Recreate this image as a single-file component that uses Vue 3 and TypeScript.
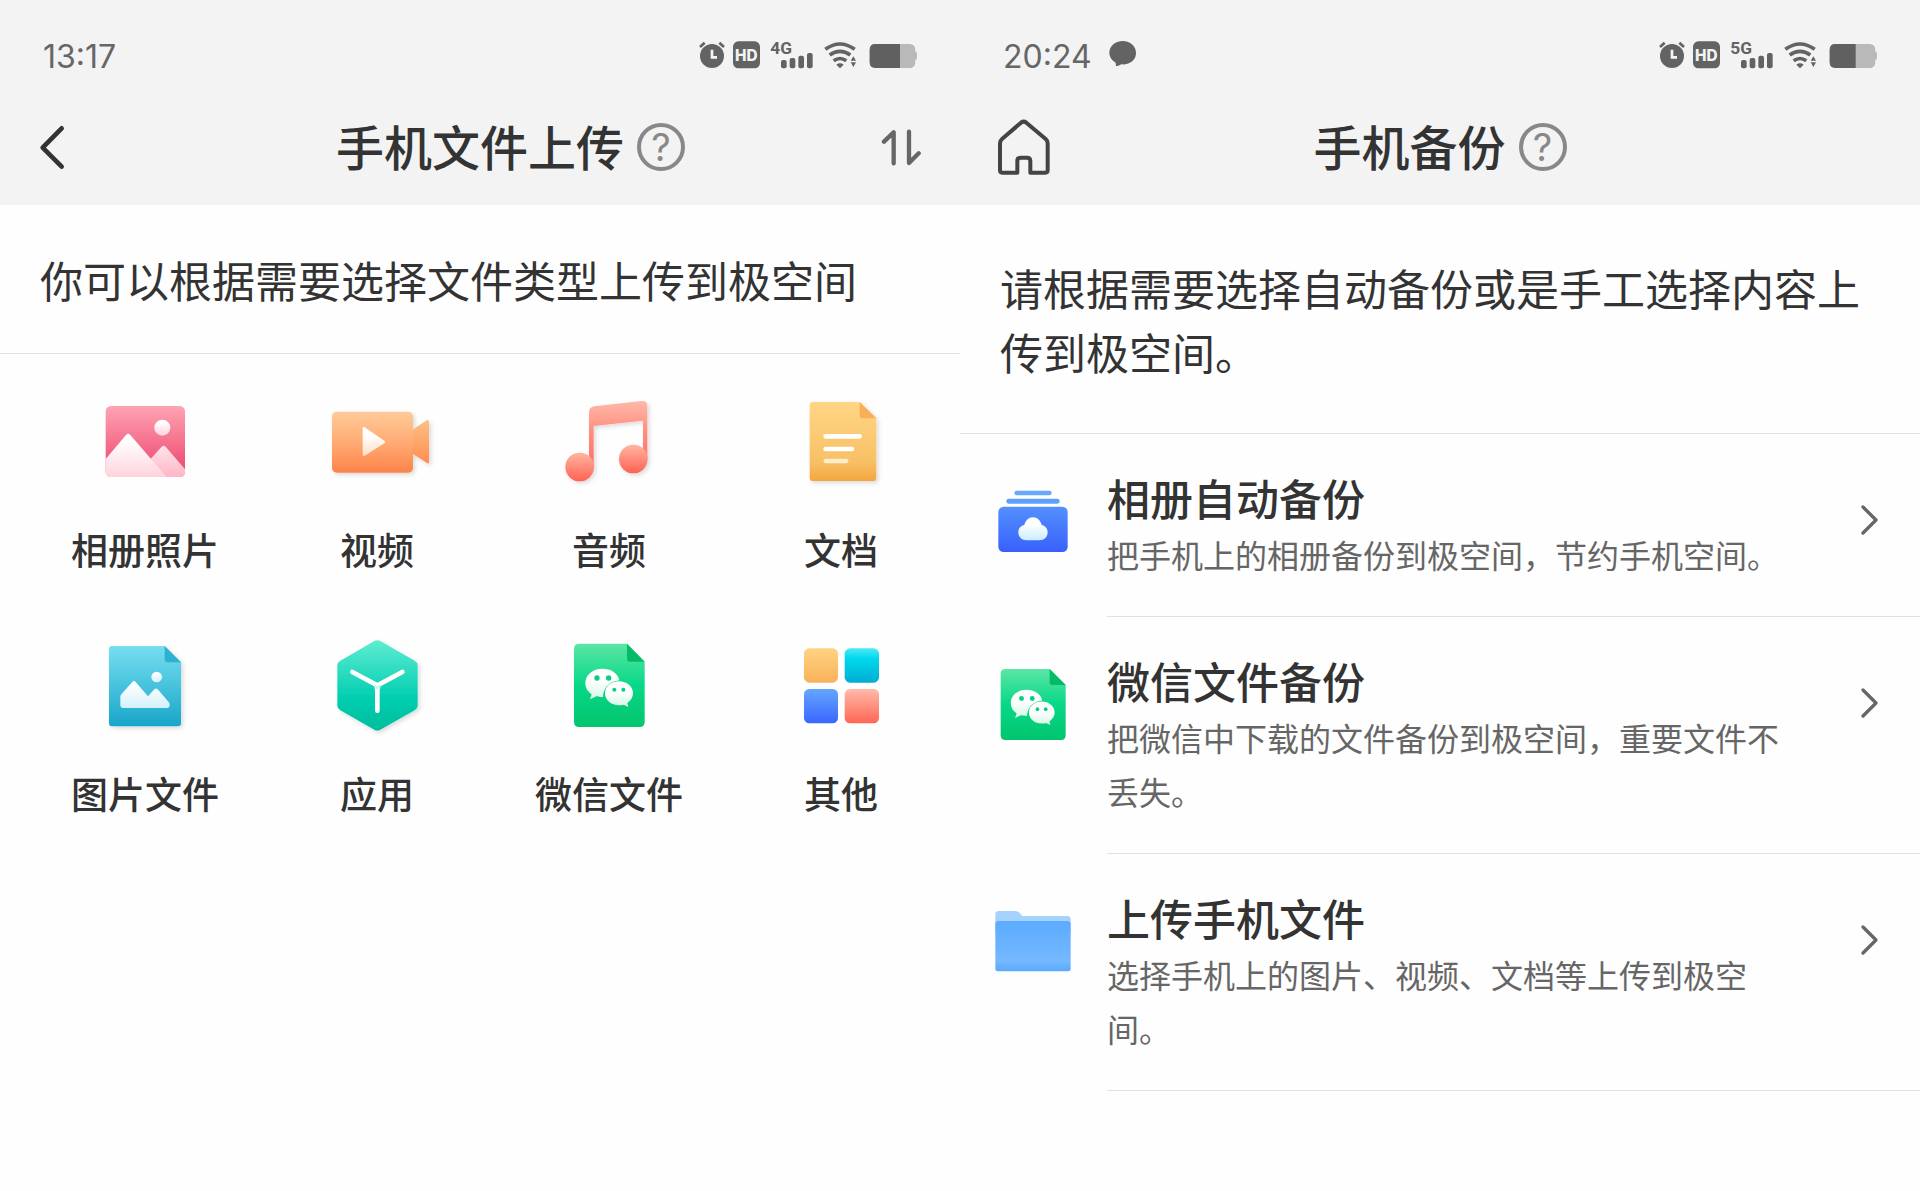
<script setup lang="ts">
interface FileType {
  id: string
  label: string
  viewBox: string
}

interface BackupEntry {
  id: string
  title: string
  description: string
  viewBox: string
}

interface StatusInfo {
  network: string
  charge: number
}

const fileTypes: FileType[] = [
  { id: 'photo', label: '相册照片', viewBox: '74 6 360 360' },
  { id: 'video', label: '视频', viewBox: '769 6 360 360' },
  { id: 'audio', label: '音频', viewBox: '87 6 360 360' },
  { id: 'document', label: '文档', viewBox: '780 6 360 360' },
  { id: 'picture', label: '图片文件', viewBox: '76 15 360 360' },
  { id: 'app', label: '应用', viewBox: '771 15 360 360' },
  { id: 'wechat', label: '微信文件', viewBox: '87 15 360 360' },
  { id: 'other', label: '其他', viewBox: '783 15 360 360' },
]

const backups: BackupEntry[] = [
  {
    id: 'album',
    title: '相册自动备份',
    description: '把手机上的相册备份到极空间，节约手机空间。',
    viewBox: '70 27 300 300',
  },
  {
    id: 'wechat',
    title: '微信文件备份',
    description: '把微信中下载的文件备份到极空间，重要文件不丢失。',
    viewBox: '70 36 300 300',
  },
  {
    id: 'folder',
    title: '上传手机文件',
    description: '选择手机上的图片、视频、文档等上传到极空间。',
    viewBox: '70 27 300 300',
  },
]

const statuses: Record<'upload' | 'backup', StatusInfo> = {
  upload: { network: '4G', charge: 90 },
  backup: { network: '5G', charge: 77 },
}
</script>

<template>
  <main class="screens">
    <svg class="defs" width="0" height="0" aria-hidden="true">
      <defs>
        <linearGradient id="pink" x1="0" y1="0" x2="0" y2="1"><stop offset="0" stop-color="#ffa3b2" /><stop offset="0.8" stop-color="#ef5579" /><stop offset="1" stop-color="#ef5579" /></linearGradient>
        <linearGradient id="snow" x1="0" y1="0" x2="0" y2="1"><stop offset="0.15" stop-color="#fff" /><stop offset="1" stop-color="#ffd3dc" /></linearGradient>
        <linearGradient id="snow-far" x1="0" y1="0" x2="0" y2="1"><stop offset="0" stop-color="#ffe4ea" /><stop offset="1" stop-color="#ffb6c6" /></linearGradient>
        <linearGradient id="orange" x1="0" y1="0" x2="0" y2="1"><stop offset="0" stop-color="#ffcb98" /><stop offset="0.5" stop-color="#ffab75" /><stop offset="1" stop-color="#fd8449" /></linearGradient>
        <linearGradient id="lens" x1="0" y1="0" x2="0" y2="1"><stop offset="0" stop-color="#fdc083" /><stop offset="1" stop-color="#ff8d52" /></linearGradient>
        <linearGradient id="play" x1="0" y1="0" x2="0" y2="1"><stop offset="0.3" stop-color="#fff" /><stop offset="1" stop-color="#ffdcc4" /></linearGradient>
        <linearGradient id="coral" x1="0" y1="0" x2="0" y2="1"><stop offset="0" stop-color="#ffb6a3" /><stop offset="1" stop-color="#ff6152" /></linearGradient>
        <linearGradient id="beam" x1="0" y1="0" x2="0" y2="1"><stop offset="0" stop-color="#ffb8a8" /><stop offset="0.45" stop-color="#ff8f80" /><stop offset="1" stop-color="#ff6f62" /></linearGradient>
        <linearGradient id="amber" x1="0" y1="0" x2="0" y2="1"><stop offset="0" stop-color="#ffd685" /><stop offset="0.75" stop-color="#f8c065" /><stop offset="1" stop-color="#f3a741" /></linearGradient>
        <linearGradient id="sky" x1="0" y1="0" x2="0" y2="1"><stop offset="0" stop-color="#76def1" /><stop offset="1" stop-color="#18a6c9" /></linearGradient>
        <linearGradient id="ice" x1="0" y1="0" x2="0" y2="1"><stop offset="0.1" stop-color="#fff" /><stop offset="1" stop-color="#d3f1fb" /></linearGradient>
        <linearGradient id="teal" x1="0" y1="0" x2="0" y2="1"><stop offset="0" stop-color="#5fecd2" /><stop offset="0.65" stop-color="#00ceb0" /><stop offset="1" stop-color="#00bd9c" /></linearGradient>
        <linearGradient id="green" x1="0" y1="0" x2="0" y2="1"><stop offset="0" stop-color="#5be6a4" /><stop offset="0.5" stop-color="#07d888" /><stop offset="1" stop-color="#03c46d" /></linearGradient>
        <linearGradient id="bubble" x1="0" y1="0" x2="0" y2="1"><stop offset="0.4" stop-color="#fff" /><stop offset="1" stop-color="#d4f7e5" /></linearGradient>
        <linearGradient id="tile-yellow" x1="0" y1="0" x2="0" y2="1"><stop offset="0" stop-color="#ffd383" /><stop offset="1" stop-color="#f9b15a" /></linearGradient>
        <linearGradient id="tile-cyan" x1="0" y1="0" x2="0" y2="1"><stop offset="0" stop-color="#4be9f6" /><stop offset="0.3" stop-color="#00d8ed" /><stop offset="1" stop-color="#00add2" /></linearGradient>
        <linearGradient id="tile-blue" x1="0" y1="0" x2="0" y2="1"><stop offset="0" stop-color="#65a5ff" /><stop offset="1" stop-color="#3a66ff" /></linearGradient>
        <linearGradient id="tile-red" x1="0" y1="0" x2="0" y2="1"><stop offset="0" stop-color="#ffbaab" /><stop offset="1" stop-color="#ff6654" /></linearGradient>
        <linearGradient id="album" x1="0" y1="0" x2="0" y2="1"><stop offset="0" stop-color="#5390ff" /><stop offset="1" stop-color="#3860fb" /></linearGradient>
        <linearGradient id="cloud" x1="0" y1="0" x2="0" y2="1"><stop offset="0.3" stop-color="#fff" /><stop offset="1" stop-color="#c9edfd" /></linearGradient>
        <linearGradient id="folder" x1="0" y1="0" x2="0" y2="1"><stop offset="0" stop-color="#5cabff" /><stop offset="0.8" stop-color="#74b8ff" /><stop offset="1" stop-color="#5aa8fd" /></linearGradient>
        <filter id="drop" x="-20%" y="-20%" width="150%" height="150%"><feDropShadow dx="6" dy="6" stdDeviation="6" flood-color="#000" flood-opacity="0.14" /></filter>
        <g id="wechat-bubbles">
          <path fill="url(#bubble)" d="M247 143c-29 0-51 19-51 43 0 14 7 26 19 34l-5 15 19-9c6 2 12 2 20 2 1-26 18-47 49-50-3-21-25-35-51-35z" />
          <path fill="url(#bubble)" d="M297 181c-24 0-42 16-42 36s18 36 42 36c5 0 10-1 14-2l14 7-3-12c10-7 17-17 17-29 0-20-18-36-42-36z" />
          <g fill="#07cf80"><circle cx="231" cy="171" r="8" /><circle cx="266" cy="171" r="8" /><circle cx="283" cy="206" r="6" /><circle cx="310" cy="206" r="6" /></g>
        </g>
      </defs>
    </svg>

    <section class="screen" aria-label="手机文件上传">
      <header class="top">
        <div class="status">
          <span class="time">13:17</span>
          <svg class="indicators" viewBox="648 56 672 96" aria-hidden="true">
            <g fill="#636363">
              <circle cx="696" cy="107" r="36" />
              <path d="M660 80l14-13M732 80l-14-13" stroke="#636363" stroke-width="8" />
              <path d="M696 88v23h15" fill="none" stroke="#f3f3f3" stroke-width="8" />
              <rect x="759" y="63" width="81" height="81" rx="16" />
              <text class="hd" x="799" y="121" text-anchor="middle" fill="#f3f3f3">HD</text>
              <text class="net" x="871" y="100">{{ statuses.upload.network }}</text>
              <rect x="903" y="119" width="17" height="25" rx="6" /><rect x="929" y="113" width="17" height="31" rx="6" /><rect x="955" y="106" width="17" height="38" rx="6" /><rect x="981" y="98" width="17" height="46" rx="6" />
              <path d="M1069 133q11-8 22 0l-11 11z" />
              <path d="M1112 121h16l-8-13zM1112 126h16l-8 14z" />
            </g>
            <path d="M1036 87q44-32 88 0M1049 104q31-22 62 0M1061 121q19-13 38 0" fill="none" stroke="#636363" stroke-width="11" />
            <path d="M1186 71h102q18 0 18 18v5q5 0 5 5v15q0 5-5 5v6q0 18-18 18h-102q-17 0-17-17v-38q0-17 17-17z" fill="#b9b9b9" />
            <path :d="`M1186 71h${statuses.upload.charge - 16}v72h-${statuses.upload.charge - 16}q-17 0-17-17v-38q0-17 17-17z`" fill="#606060" />
          </svg>
        </div>
        <nav class="nav">
          <button class="tool" type="button" aria-label="返回">
            <svg width="30" height="50" viewBox="110 300 90 150"><path d="M184 319l-57 58 57 57" fill="none" stroke="#333" stroke-width="14" stroke-linecap="round" stroke-linejoin="round" /></svg>
          </button>
          <div class="heading heading-offset">
            <h1>手机文件上传</h1>
            <button class="help" type="button" aria-label="帮助">?</button>
          </div>
          <button class="tool tool-end" type="button" aria-label="传输列表">
            <svg width="42" height="50" viewBox="1203 300 126 150"><path d="M1212 359l29-28v93M1287 329v94l29-29" fill="none" stroke="#666" stroke-width="13" stroke-linecap="round" stroke-linejoin="round" /></svg>
          </button>
        </nav>
      </header>

      <p class="intro">你可以根据需要选择文件类型上传到极空间</p>

      <div class="types">
        <button v-for="item in fileTypes" :key="item.id" class="type" type="button">
          <svg class="type-icon" :viewBox="item.viewBox" aria-hidden="true">
            <g v-if="item.id === 'photo'">
              <rect x="136" y="78" width="238" height="213" rx="16" fill="url(#pink)" />
              <path d="M270 238l34-38q6-6 12 0l58 68v9q0 14-15 14H240z" fill="url(#snow-far)" />
              <path d="M136 237l61-72q7-7 13 0l109 126H151q-15 0-15-14z" fill="url(#snow)" />
              <circle cx="306" cy="143" r="24" fill="url(#snow)" />
            </g>
            <g v-else-if="item.id === 'video'" filter="url(#drop)">
              <path d="M1052 151l47-30q6-3 6 4v120q0 8-6 4l-47-30z" fill="url(#lens)" />
              <rect x="814" y="95" width="243" height="183" rx="14" fill="url(#orange)" />
              <path d="M906 145q0-6 6-3l60 41q4 3 0 6l-60 38q-6 3-6-3z" fill="url(#play)" />
            </g>
            <g v-else-if="item.id === 'audio'" filter="url(#drop)">
              <path d="M207 98q0-17 16-19l142-16q17-1 17 15v158h-13V122l-148 16v124h-14z" fill="url(#beam)" />
              <circle cx="179" cy="261" r="43" fill="url(#coral)" /><circle cx="340" cy="237" r="43" fill="url(#coral)" />
            </g>
            <g v-else-if="item.id === 'document'" filter="url(#drop)">
              <path d="M876 66h140l50 49v178q0 10-10 10H876q-10 0-10-10V76q0-10 10-10z" fill="url(#amber)" />
              <path d="M1016 66l50 49h-41q-9 0-9-9z" fill="#f9ae58" />
              <path d="M914 169h102M914 207h79" stroke="#fff" stroke-width="14" stroke-linecap="round" />
              <path d="M914 243h62" stroke="#ffedcc" stroke-width="13" stroke-linecap="round" />
            </g>
            <g v-else-if="item.id === 'picture'" filter="url(#drop)">
              <path d="M157 75h158l49 49v182q0 10-10 10H157q-9 0-9-10V85q0-10 9-10z" fill="url(#sky)" />
              <path d="M315 75l49 49h-40q-9 0-9-9z" fill="#2fb0d2" />
              <path d="M182 228q0-5 3-8l33-37q5-6 10 0l37 43 19-21q5-5 10 0l33 38q3 4 3 8v2q0 8-9 8H191q-9 0-9-9z" fill="url(#ice)" />
              <circle cx="291" cy="168" r="16" fill="url(#ice)" />
            </g>
            <g v-else-if="item.id === 'app'" filter="url(#drop)">
              <path d="M943 60q9-5 18 0l103 59q9 5 9 14v121q0 9-9 14l-103 58q-9 5-18 0l-102-58q-9-5-9-14V133q0-9 9-14z" fill="url(#teal)" />
              <path d="M877 153l75 40 75-40M952 193v76" fill="none" stroke="#fff" stroke-width="14" stroke-linecap="round" />
              <path d="M943 190l9 5 9-5v14h-18z" fill="#cdf8ef" />
            </g>
            <g v-else-if="item.id === 'wechat'">
              <path d="M178 68h143l53 54v180q0 16-16 16H178q-16 0-16-16V84q0-16 16-16z" fill="url(#green)" />
              <path d="M321 68l53 54h-45q-8 0-8-8z" fill="#05bb66" />
              <use href="#wechat-bubbles" />
            </g>
            <g v-else>
              <rect x="852" y="82" width="102" height="103" rx="16" fill="url(#tile-yellow)" />
              <rect x="974" y="82" width="103" height="103" rx="16" fill="url(#tile-cyan)" />
              <rect x="852" y="204" width="102" height="103" rx="16" fill="url(#tile-blue)" />
              <rect x="974" y="204" width="103" height="103" rx="16" fill="url(#tile-red)" />
            </g>
          </svg>
          <span class="type-label">{{ item.label }}</span>
        </button>
      </div>
    </section>

    <section class="screen" aria-label="手机备份">
      <header class="top">
        <div class="status">
          <span class="time">20:24</span>
          <svg class="message" width="30" height="32" viewBox="441 56 90 96" aria-hidden="true"><path d="M485 62c-23 0-40 15-40 36 0 12 7 22 19 29l1 11q10-2 16-6c25 2 44-12 44-34 0-21-17-36-40-36z" fill="#636363" /></svg>
          <svg class="indicators" viewBox="648 56 672 96" aria-hidden="true">
            <g fill="#636363">
              <circle cx="696" cy="107" r="36" />
              <path d="M660 80l14-13M732 80l-14-13" stroke="#636363" stroke-width="8" />
              <path d="M696 88v23h15" fill="none" stroke="#f3f3f3" stroke-width="8" />
              <rect x="759" y="63" width="81" height="81" rx="16" />
              <text class="hd" x="799" y="121" text-anchor="middle" fill="#f3f3f3">HD</text>
              <text class="net" x="871" y="100">{{ statuses.backup.network }}</text>
              <rect x="903" y="119" width="17" height="25" rx="6" /><rect x="929" y="113" width="17" height="31" rx="6" /><rect x="955" y="106" width="17" height="38" rx="6" /><rect x="981" y="98" width="17" height="46" rx="6" />
              <path d="M1069 133q11-8 22 0l-11 11z" />
              <path d="M1112 121h16l-8-13zM1112 126h16l-8 14z" />
            </g>
            <path d="M1036 87q44-32 88 0M1049 104q31-22 62 0M1061 121q19-13 38 0" fill="none" stroke="#636363" stroke-width="11" />
            <path d="M1186 71h102q18 0 18 18v5q5 0 5 5v15q0 5-5 5v6q0 18-18 18h-102q-17 0-17-17v-38q0-17 17-17z" fill="#b9b9b9" />
            <path :d="`M1186 71h${statuses.backup.charge - 16}v72h-${statuses.backup.charge - 16}q-17 0-17-17v-38q0-17 17-17z`" fill="#606060" />
          </svg>
        </div>
        <nav class="nav">
          <button class="tool" type="button" aria-label="首页">
            <svg width="54" height="58" viewBox="110 296 162 174"><path d="M182 310q8-6 16 0l58 49q6 5 6 13v81q0 7-7 7h-45v-35q0-10-10-10h-19q-10 0-10 10v35h-45q-7 0-7-7v-81q0-8 6-13z" fill="none" stroke="#444" stroke-width="12" stroke-linejoin="round" /></svg>
          </button>
          <div class="heading">
            <h1>手机备份</h1>
            <button class="help" type="button" aria-label="帮助">?</button>
          </div>
        </nav>
      </header>

      <p class="intro intro-tall">请根据需要选择自动备份或是手工选择内容上传到极空间。</p>

      <div class="entries">
        <a v-for="entry in backups" :key="entry.id" class="entry" href="#">
          <svg class="entry-icon" :viewBox="entry.viewBox" aria-hidden="true">
            <g v-if="entry.id === 'album'">
              <rect x="164" y="89" width="112" height="14" rx="7" fill="#66aaf9" />
              <rect x="140" y="113" width="160" height="15" rx="7" fill="#5f9ffc" />
              <rect x="116" y="137" width="208" height="136" rx="16" fill="url(#album)" />
              <path d="M201 238c-15 0-25-10-25-24 0-11 7-20 18-22 3-13 13-23 26-23s23 10 26 23c11 2 18 11 18 22 0 14-10 24-25 24z" fill="url(#cloud)" />
            </g>
            <g v-else-if="entry.id === 'wechat'">
              <path d="M137 84h133l48 48v151q0 14-14 14H137q-14 0-14-14V98q0-14 14-14z" fill="url(#green)" />
              <path d="M270 84l48 48h-41q-7 0-7-7z" fill="#05bb66" />
              <use href="#wechat-bubbles" transform="translate(-27 15) scale(0.92)" />
            </g>
            <g v-else>
              <path d="M117 90h50q9 0 14 7l7 8h135q10 0 10 10v40H107v-55q0-10 10-10z" fill="#a6d2fe" />
              <path d="M117 120h206q10 0 10 10v134q0 7-7 7H114q-7 0-7-7V130q0-10 10-10z" fill="url(#folder)" />
            </g>
          </svg>
          <span class="entry-body">
            <span class="entry-text">
              <strong class="entry-title">{{ entry.title }}</strong>
              <span class="entry-desc">{{ entry.description }}</span>
            </span>
            <svg class="chevron" width="20" height="34" viewBox="660 246 60 102" aria-hidden="true"><path d="M669 258l39 39-39 39" fill="none" stroke="#666" stroke-width="10" stroke-linecap="round" stroke-linejoin="round" /></svg>
          </span>
        </a>
      </div>
    </section>
  </main>
</template>

<style>
body {
  margin: 0;
  background: #fefefe;
}
</style>

<style scoped>
.screens {
  display: grid;
  grid-template-columns: 1fr 1fr;
  font-family: "Noto Sans CJK SC", sans-serif;
  color: #333;
}

.defs {
  position: absolute;
}

button {
  padding: 0;
  border: 0;
  background: none;
  color: inherit;
  font: inherit;
  cursor: pointer;
}

svg {
  display: block;
  flex: none;
}

.top {
  background: #f3f3f3;
}

.status {
  display: flex;
  align-items: center;
  height: 82px;
  padding: 14px 40px 0 43px;
}

.time {
  padding-top: 4px;
  font: 400 32px/40px Inter, sans-serif;
  color: #666;
}

.message {
  margin-left: 16px;
}

.indicators {
  width: 224px;
  height: 32px;
  margin-left: auto;
}

.hd {
  font: 800 46px Inter, sans-serif;
}

.net {
  font: 700 52px Roboto, sans-serif;
}

.nav {
  display: grid;
  grid-template-columns: 1fr auto 1fr;
  align-items: center;
  height: 101px;
  padding: 0 37px 8px;
}

.tool {
  justify-self: start;
}

.tool-end {
  justify-self: end;
}

.heading {
  display: flex;
  align-items: center;
  gap: 13px;
}

.heading-offset {
  margin-left: 61px;
}

h1 {
  margin: 0;
  padding-bottom: 4px;
  font-size: 48px;
  font-weight: 500;
  line-height: 60px;
}

.help {
  box-sizing: border-box;
  width: 48px;
  height: 48px;
  border: 4px solid #888;
  border-radius: 50%;
  font: 400 38px/40px Inter, sans-serif;
  color: #888;
}

.intro {
  margin: 0;
  padding: 42px 40px;
  border-bottom: 1px solid #e2e2e2;
  font-size: 43px;
  line-height: 64px;
}

.intro-tall {
  padding: 50px 40px;
}

.types {
  display: grid;
  grid-template-columns: repeat(4, 1fr);
  row-gap: 50px;
  padding: 28px 3px 0 29px;
}

.type {
  display: flex;
  flex-direction: column;
  align-items: center;
  gap: 20px;
}

.type-icon {
  width: 120px;
  height: 120px;
}

.type-label {
  font-size: 37px;
  font-weight: 500;
  line-height: 54px;
}

.entry {
  display: flex;
  gap: 24px;
  padding-left: 23px;
  color: inherit;
  text-decoration: none;
}

.entry-icon {
  width: 100px;
  height: 100px;
  margin-top: 36px;
}

.entry-body {
  display: flex;
  flex: 1;
  gap: 56px;
  padding: 33px 40px 35px 0;
  border-bottom: 1px solid #e2e2e2;
}

.entry-text {
  flex: 1;
}

.entry-title {
  display: block;
  font-size: 43px;
  font-weight: 500;
  line-height: 60px;
}

.entry-desc {
  display: block;
  font-size: 32px;
  line-height: 54px;
  color: #666;
}

.chevron {
  margin-top: 36px;
}
</style>
